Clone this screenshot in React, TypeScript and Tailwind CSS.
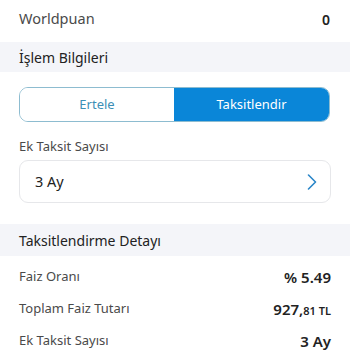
import React from "react";

export default function App() {
  const font = { fontFamily: '"Noto Sans", "Open Sans", sans-serif' };
  return (
    <div className="w-[350px] h-[350px] overflow-hidden bg-white" style={font}>
      <div className="h-[42px] pb-[4px] px-[19px] flex items-center justify-between">
        <span className="text-[14.5px] text-[#4a4a4a]">Worldpuan</span>
        <span className="text-[14px] font-semibold text-[#222] pr-[1px]">0</span>
      </div>
      <div className="h-[30px] bg-[#f4f5f9] px-[19px] flex items-center">
        <span className="text-[14px] text-[#222]">İşlem Bilgileri</span>
      </div>
      <div className="px-[19px] pt-[15px] pr-[20px]">
        <div className="h-[35px] flex rounded-[9px] border border-[#8dbcd0] overflow-hidden">
          <div className="flex-1 flex items-center justify-center text-[13px] text-[#3d8fb6] bg-white">Ertele</div>
          <div className="w-[155px] flex items-center justify-center text-[13px] text-white bg-[#0a86d8]">Taksitlendir</div>
        </div>
      </div>
      <div className="px-[19px] h-[38px] flex items-center pt-[11px]">
        <span className="text-[13px] text-[#4a4a4a]">Ek Taksit Sayısı</span>
      </div>
      <div className="px-[19px]">
        <div className="h-[43px] rounded-[9px] border border-[#e6e7ea] flex items-center justify-between pl-[15px] pr-[13px]">
          <span className="text-[14.5px] text-[#222]">3 Ay</span>
          <svg width="10" height="16" viewBox="0 0 10 16" fill="none">
            <path d="M1.5 1 L8.5 8 L1.5 15" stroke="#2a86c8" strokeWidth="1.6" strokeLinecap="round" strokeLinejoin="round" />
          </svg>
        </div>
      </div>
      <div className="mt-[21px] h-[32px] bg-[#f4f5f9] px-[19px] flex items-center">
        <span className="text-[14px] text-[#222]">Taksitlendirme Detayı</span>
      </div>
      <div className="px-[19px] pt-[5px]">
        <div className="h-[32px] flex items-center justify-between">
          <span className="text-[13px] text-[#4a4a4a]">Faiz Oranı</span>
          <span className="text-[15px] font-semibold text-[#222]">% 5.49</span>
        </div>
        <div className="h-[32px] flex items-center justify-between">
          <span className="text-[13px] text-[#4a4a4a]">Toplam Faiz Tutarı</span>
          <span className="text-[15px] font-semibold text-[#222]">
            927,<span className="text-[11px]">81 TL</span>
          </span>
        </div>
        <div className="h-[32px] flex items-center justify-between">
          <span className="text-[13px] text-[#4a4a4a]">Ek Taksit Sayısı</span>
          <span className="text-[15px] font-semibold text-[#222]">3 Ay</span>
        </div>
      </div>
    </div>
  );
}
